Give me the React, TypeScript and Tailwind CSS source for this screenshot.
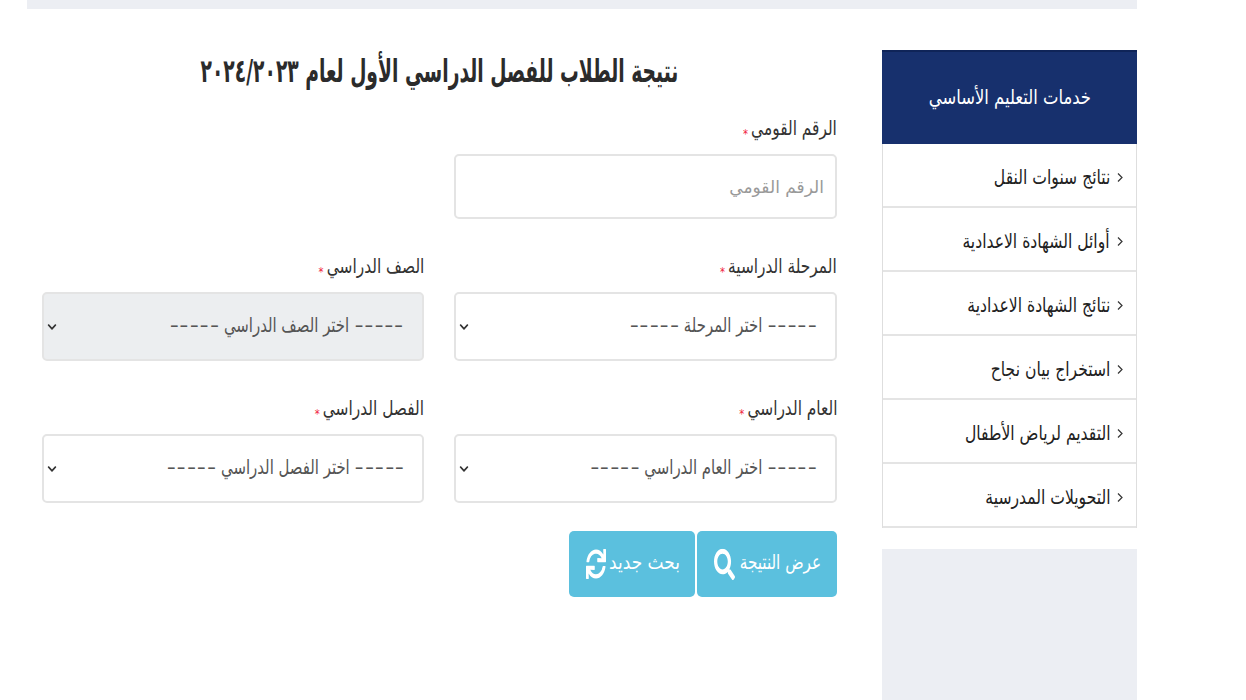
import { FaChevronDown, FaSearch, FaSync } from "react-icons/fa";

const links = [
  "نتائج سنوات النقل",
  "أوائل الشهادة الاعدادية",
  "نتائج الشهادة الاعدادية",
  "استخراج بيان نجاح",
  "التقديم لرياض الأطفال",
  "التحويلات المدرسية",
];

function Label({ text }: { text: string }) {
  return (
    <label className="flex h-[24px] items-center">
      <span className="origin-right scale-x-[.77] text-[20px] leading-none whitespace-nowrap text-[#333]">
        {text}
        <span className="mr-[4px] align-[-3px] text-[13px] text-[#f01c3c]">*</span>
      </span>
    </label>
  );
}

// the five spaced out hyphens either side of a select's placeholder
function Dashes() {
  return (
    <>
      {[0, 1, 2, 3, 4].map((i) => (
        <span key={i} className="inline-block w-[13.4px] scale-x-[1.7] text-center">
          -
        </span>
      ))}
    </>
  );
}

function Field({
  label,
  placeholder,
  disabled,
}: {
  label: string;
  placeholder: string;
  disabled?: boolean;
}) {
  return (
    <div className="flex flex-col gap-[13px]">
      <Label text={label} />
      <div
        className={`flex h-[69px] w-full items-center justify-between rounded-[5px] border-2 border-[#e4e4e4] pr-[18px] pl-[3px] text-[#555] ${
          disabled ? "bg-[#eceef0]" : "bg-white"
        }`}
      >
        <span className="-mt-[3px] origin-right scale-x-[.745] text-[20px] whitespace-nowrap">
          <Dashes /> {placeholder} <Dashes />
        </span>
        <FaChevronDown size={10} className="scale-y-110 text-[#333]" />
      </div>
    </div>
  );
}

export default function App() {
  return (
    <div
      dir="rtl"
      className="h-[700px] w-[1246px] overflow-hidden bg-white font-['DejaVu_Sans',sans-serif]"
    >
      <div className="mr-[109px] ml-[27px] h-[9px] bg-[#eceef3]" />

      <div className="mr-[109px] ml-[42px] flex gap-[45px] pt-[41px]">
        {/* sidebar */}
        <aside className="flex h-[650px] w-[255px] shrink-0 flex-col">
          <div className="flex h-[94px] items-center justify-center border-t-2 border-[#0f2458] bg-[#17306d] pb-[3px] text-white">
            <span className="scale-x-[.82] text-[20px] whitespace-nowrap">خدمات التعليم الأساسي</span>
          </div>
          <ul className="border-x border-[#dedede]">
            {links.map((link) => (
              <li
                key={link}
                className="flex h-[64px] items-center gap-[7px] border-b-2 border-[#e4e4e4] pt-[4px] pr-[13px]"
              >
                <svg width="6" height="12" viewBox="0 0 6 12" className="shrink-0" fill="none">
                  <path d="M1 2.5 5 6.5 1 10.5" stroke="#333" strokeWidth="1.2" />
                </svg>
                <span className="origin-right scale-x-[.78] text-[20px] whitespace-nowrap text-[#222]">
                  {link}
                </span>
              </li>
            ))}
          </ul>
          <div className="mt-[21px] flex-1 bg-[#eceef3]" />
        </aside>

        {/* form */}
        <main className="min-w-0 flex-1">
          <h1 className="flex justify-center pt-px text-[32px] leading-[40px] font-bold whitespace-nowrap text-[#2b2b2b]">
            <span className="shrink-0 scale-x-[.585]">
              نتيجة الطلاب للفصل الدراسي الأول لعام ٢٠٢٤/٢٠٢٣
            </span>
          </h1>

          <div className="mt-[26px] flex w-[383px] flex-col gap-[13px]">
            <Label text="الرقم القومي" />
            <input
              placeholder="الرقم القومي"
              className="h-[65px] w-full rounded-[5px] border-2 border-[#e4e4e4] bg-white pr-[11px] text-[17px] placeholder:text-[#999]"
            />
          </div>

          <div className="mt-[36px] grid grid-cols-[383px_382px] gap-x-[30px] gap-y-[36px]">
            <Field label="المرحلة الدراسية" placeholder="اختر المرحلة" />
            <Field label="الصف الدراسي" placeholder="اختر الصف الدراسي" disabled />
            <Field label="العام الدراسي" placeholder="اختر العام الدراسي" />
            <Field label="الفصل الدراسي" placeholder="اختر الفصل الدراسي" />
          </div>

          <div className="mt-[28px] flex gap-[2px]">
            <button className="flex h-[66px] w-[140px] items-center gap-[3px] rounded-[5px] bg-[#5bc0de] pr-[16px] text-white">
              <span className="-mt-[4px] w-[83px] origin-right scale-x-[.76] text-[20px] whitespace-nowrap">
                عرض النتيجة
              </span>
              <FaSearch size={21} className="scale-y-150" />
            </button>
            <button className="flex h-[66px] w-[126px] items-center gap-[3px] rounded-[5px] bg-[#5bc0de] pr-[15px] text-white">
              <span className="-mt-[4px] w-[71px] origin-right scale-x-[.85] text-[20px] whitespace-nowrap">
                بحث جديد
              </span>
              <FaSync size={20} className="scale-y-150" />
            </button>
          </div>
        </main>
      </div>
    </div>
  );
}
